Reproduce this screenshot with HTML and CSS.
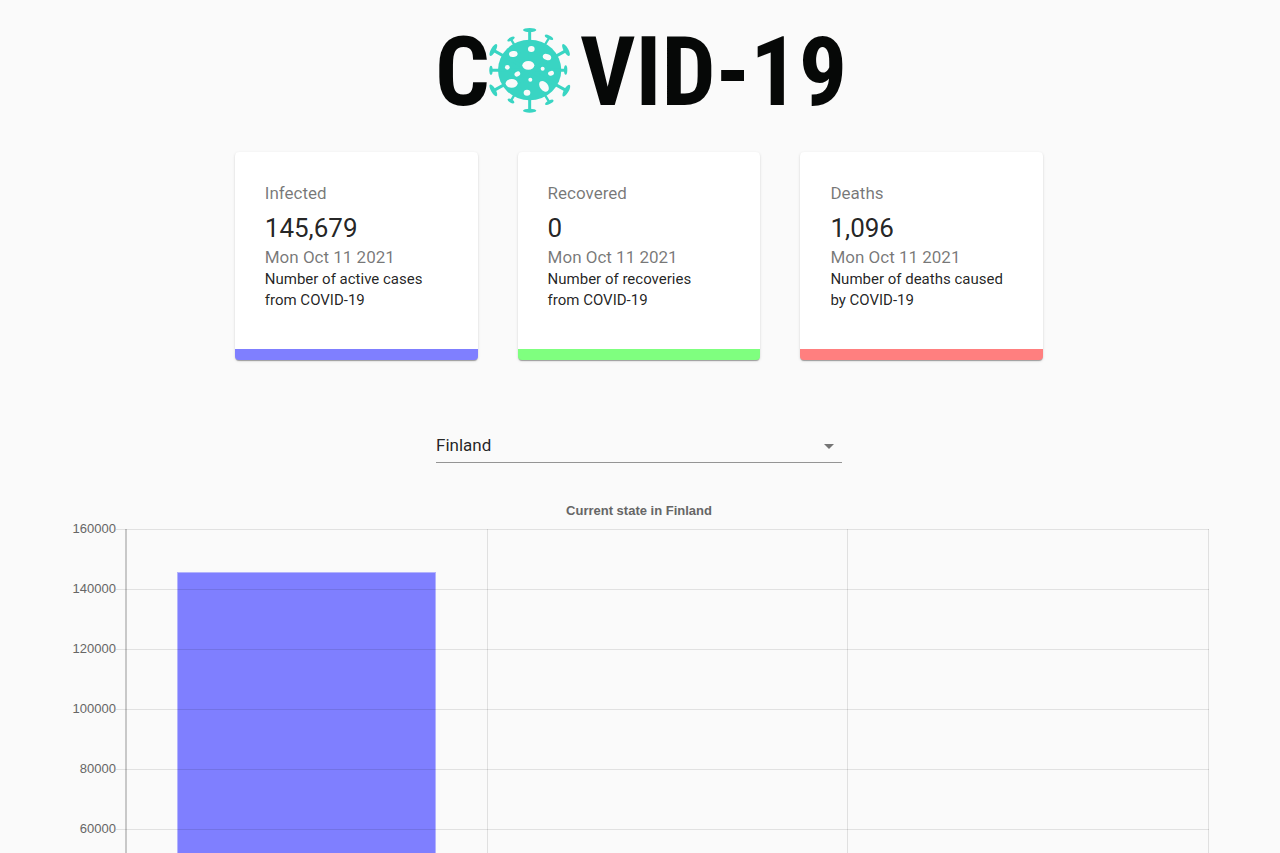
FILE: index.html
```html
<!DOCTYPE html>
<html lang="en">
<head>
<meta charset="utf-8">
<meta name="viewport" content="width=device-width, initial-scale=1">
<title>COVID-19</title>
<link rel="stylesheet" href="styles.css">
</head>
<body>
<main class="page">
  <header class="header">
    <svg class="logo" viewBox="0 0 420 100" role="img" aria-label="COVID-19">
      <text class="logo-text" x="5" y="85">C</text>
      <g class="virus" transform="scale(.3333)">
        <ellipse cx="299" cy="150" rx="95" ry="91"/>
        <g class="stems">
          <path d="M299 32V270M186 151H406M192 92L408 211M408 92L192 211"/>
          <path class="thin" d="M243 58L357 245M357 54L243 242"/>
        </g>
        <ellipse cx="299" cy="30" rx="20" ry="6"/>
        <ellipse cx="299" cy="272" rx="20" ry="6"/>
        <ellipse cx="183" cy="151" rx="5" ry="14"/>
        <ellipse cx="407" cy="150" rx="5" ry="14"/>
        <ellipse cx="190" cy="90" rx="20" ry="7" transform="rotate(-60 190 90)"/>
        <ellipse cx="408" cy="90" rx="20" ry="7" transform="rotate(60 408 90)"/>
        <ellipse cx="190" cy="211" rx="20" ry="7" transform="rotate(60 190 211)"/>
        <ellipse cx="409" cy="212" rx="20" ry="7" transform="rotate(-60 409 212)"/>
        <ellipse cx="243" cy="57" rx="12" ry="5" transform="rotate(-28 243 57)"/>
        <ellipse cx="357" cy="52" rx="14" ry="5" transform="rotate(28 357 52)"/>
        <ellipse cx="243" cy="243" rx="11" ry="5" transform="rotate(28 243 243)"/>
        <ellipse cx="358" cy="247" rx="14" ry="5" transform="rotate(-28 358 247)"/>
        <g class="spots">
          <ellipse cx="304" cy="87" rx="10" ry="9"/>
          <ellipse cx="250" cy="102" rx="13" ry="9" transform="rotate(-10 250 102)"/>
          <ellipse cx="351" cy="111" rx="13" ry="9" transform="rotate(20 351 111)"/>
          <ellipse cx="295" cy="136" rx="18" ry="13"/>
          <circle cx="232" cy="142" r="7"/>
          <circle cx="338" cy="146" r="6"/>
          <ellipse cx="262" cy="162" rx="9" ry="7" transform="rotate(-30 262 162)"/>
          <ellipse cx="363" cy="160" rx="9" ry="7" transform="rotate(-20 363 160)"/>
          <circle cx="301" cy="179" r="6"/>
          <ellipse cx="245" cy="190" rx="18" ry="13"/>
          <ellipse cx="342" cy="199" rx="12" ry="18" transform="rotate(-38 342 199)"/>
          <ellipse cx="291" cy="218" rx="10" ry="9"/>
        </g>
      </g>
      <text class="logo-text" x="150" y="85">VID-19</text>
    </svg>
  </header>

  <section class="cards">
    <article class="card infected">
      <p class="muted label">Infected</p>
      <h2 class="count">145,679</h2>
      <p class="muted">Mon Oct 11 2021</p>
      <p class="note">Number of active cases<br>from COVID-19</p>
    </article>
    <article class="card recovered">
      <p class="muted label">Recovered</p>
      <h2 class="count">0</h2>
      <p class="muted">Mon Oct 11 2021</p>
      <p class="note">Number of recoveries<br>from COVID-19</p>
    </article>
    <article class="card deaths">
      <p class="muted label">Deaths</p>
      <h2 class="count">1,096</h2>
      <p class="muted">Mon Oct 11 2021</p>
      <p class="note">Number of deaths caused<br>by COVID-19</p>
    </article>
  </section>

  <div class="picker">
    <select class="country" aria-label="Country"><option>Finland</option></select>
    <svg class="arrow" viewBox="0 0 10 5" aria-hidden="true"><path d="M0 0h10L5 5z"/></svg>
  </div>

  <section class="chart">
    <h3 class="chart-title">Current state in Finland</h3>
    <div class="chart-body">
      <div class="scale">
        <span>160000</span><span>140000</span><span>120000</span><span>100000</span><span>80000</span><span>60000</span>
      </div>
      <div class="plot">
        <div class="column"><div class="bar"></div></div>
        <div class="column"></div>
        <div class="column"></div>
      </div>
    </div>
  </section>
</main>
</body>
</html>
```
FILE: styles.css
```css
* { box-sizing: border-box; }

body {
  margin: 0;
  background: #fafafa;
  color: rgba(0, 0, 0, .87);
  font-family: Roboto, sans-serif;
}

h2, h3, p { margin: 0; font-weight: 400; }

.page {
  display: flex;
  flex-direction: column;
  height: 100vh;
  overflow: hidden;
}

.header {
  display: flex;
  justify-content: center;
  padding: 20px 0 32px;
}

.logo { width: 420px; height: 100px; }

.logo-text {
  fill: #060807;
  font: 700 96px "Roboto Condensed", "Open Sans Condensed", "Noto Sans CJK SC", sans-serif;
}

.virus { fill: #39d5c3; }
.stems { stroke: #39d5c3; stroke-width: 9; }
.thin { stroke-width: 7; }
.spots { fill: #fafafa; }

.cards {
  display: flex;
  justify-content: center;
  gap: 40px;
  padding-right: 2px;
}

.card {
  width: 19%;
  padding: 29px 30px 38px;
  background: #fff;
  border-bottom: 11px solid;
  border-radius: 4px;
  box-shadow: 0 2px 1px -1px rgba(0, 0, 0, .2), 0 1px 1px rgba(0, 0, 0, .14), 0 1px 3px rgba(0, 0, 0, .12);
}

.infected { border-bottom-color: #7f7fff; }
.recovered { border-bottom-color: #7fff7f; }
.deaths { border-bottom-color: #ff7f7f; }

.card .muted { color: rgba(0, 0, 0, .54); font-size: 17px; line-height: 24px; }
.card .label { margin-bottom: 6px; }
.count { font-size: 26px; line-height: 34px; }
.card .note { font-size: 15px; line-height: 21px; white-space: nowrap; }

.picker {
  position: relative;
  width: 406px;
  margin: 68px auto 0;
  left: -1px;
}

.country {
  display: block;
  width: 100%;
  height: 35px;
  padding: 0 30px 1px 0;
  appearance: none;
  border: 0;
  border-bottom: 1px solid #949494;
  border-radius: 0;
  background: transparent;
  color: rgba(0, 0, 0, .87);
  font: 17px Roboto, sans-serif;
}

.arrow {
  position: absolute;
  right: 8px;
  top: 16px;
  width: 10px;
  height: 5px;
  fill: #757575;
  pointer-events: none;
}

.chart {
  flex: 1;
  min-height: 0;
  padding: 38px 71px 0 72px;
  color: #666;
  font-family: "Liberation Sans", Arial, sans-serif;
}

.chart-title {
  padding: 0 3px 8px 0;
  font-size: 13px;
  font-weight: 700;
  line-height: 20px;
  text-align: center;
}

.chart-body { display: flex; }

.scale {
  display: flex;
  flex-direction: column;
  width: 44px;
  margin: -30px 9px 0 0;
  font-size: 13px;
  line-height: 60px;
  text-align: right;
}

.plot {
  position: relative;
  flex: 1;
  display: grid;
  grid-template-columns: repeat(3, 1fr);
  height: 480px;
  border-left: 2px solid #c8c8c8;
}

.plot::after {
  content: "";
  position: absolute;
  inset: 0 0 0 -11px;
  background: repeating-linear-gradient(rgba(0, 0, 0, .1) 0 1px, transparent 1px 60px);
}

.column {
  display: flex;
  align-items: flex-end;
  justify-content: center;
  border-right: 1px solid rgba(0, 0, 0, .1);
}

.bar {
  width: 72%;
  height: 91%;
  background: #7f7fff;
  border: 1px solid #b3b3fc;
}
```
